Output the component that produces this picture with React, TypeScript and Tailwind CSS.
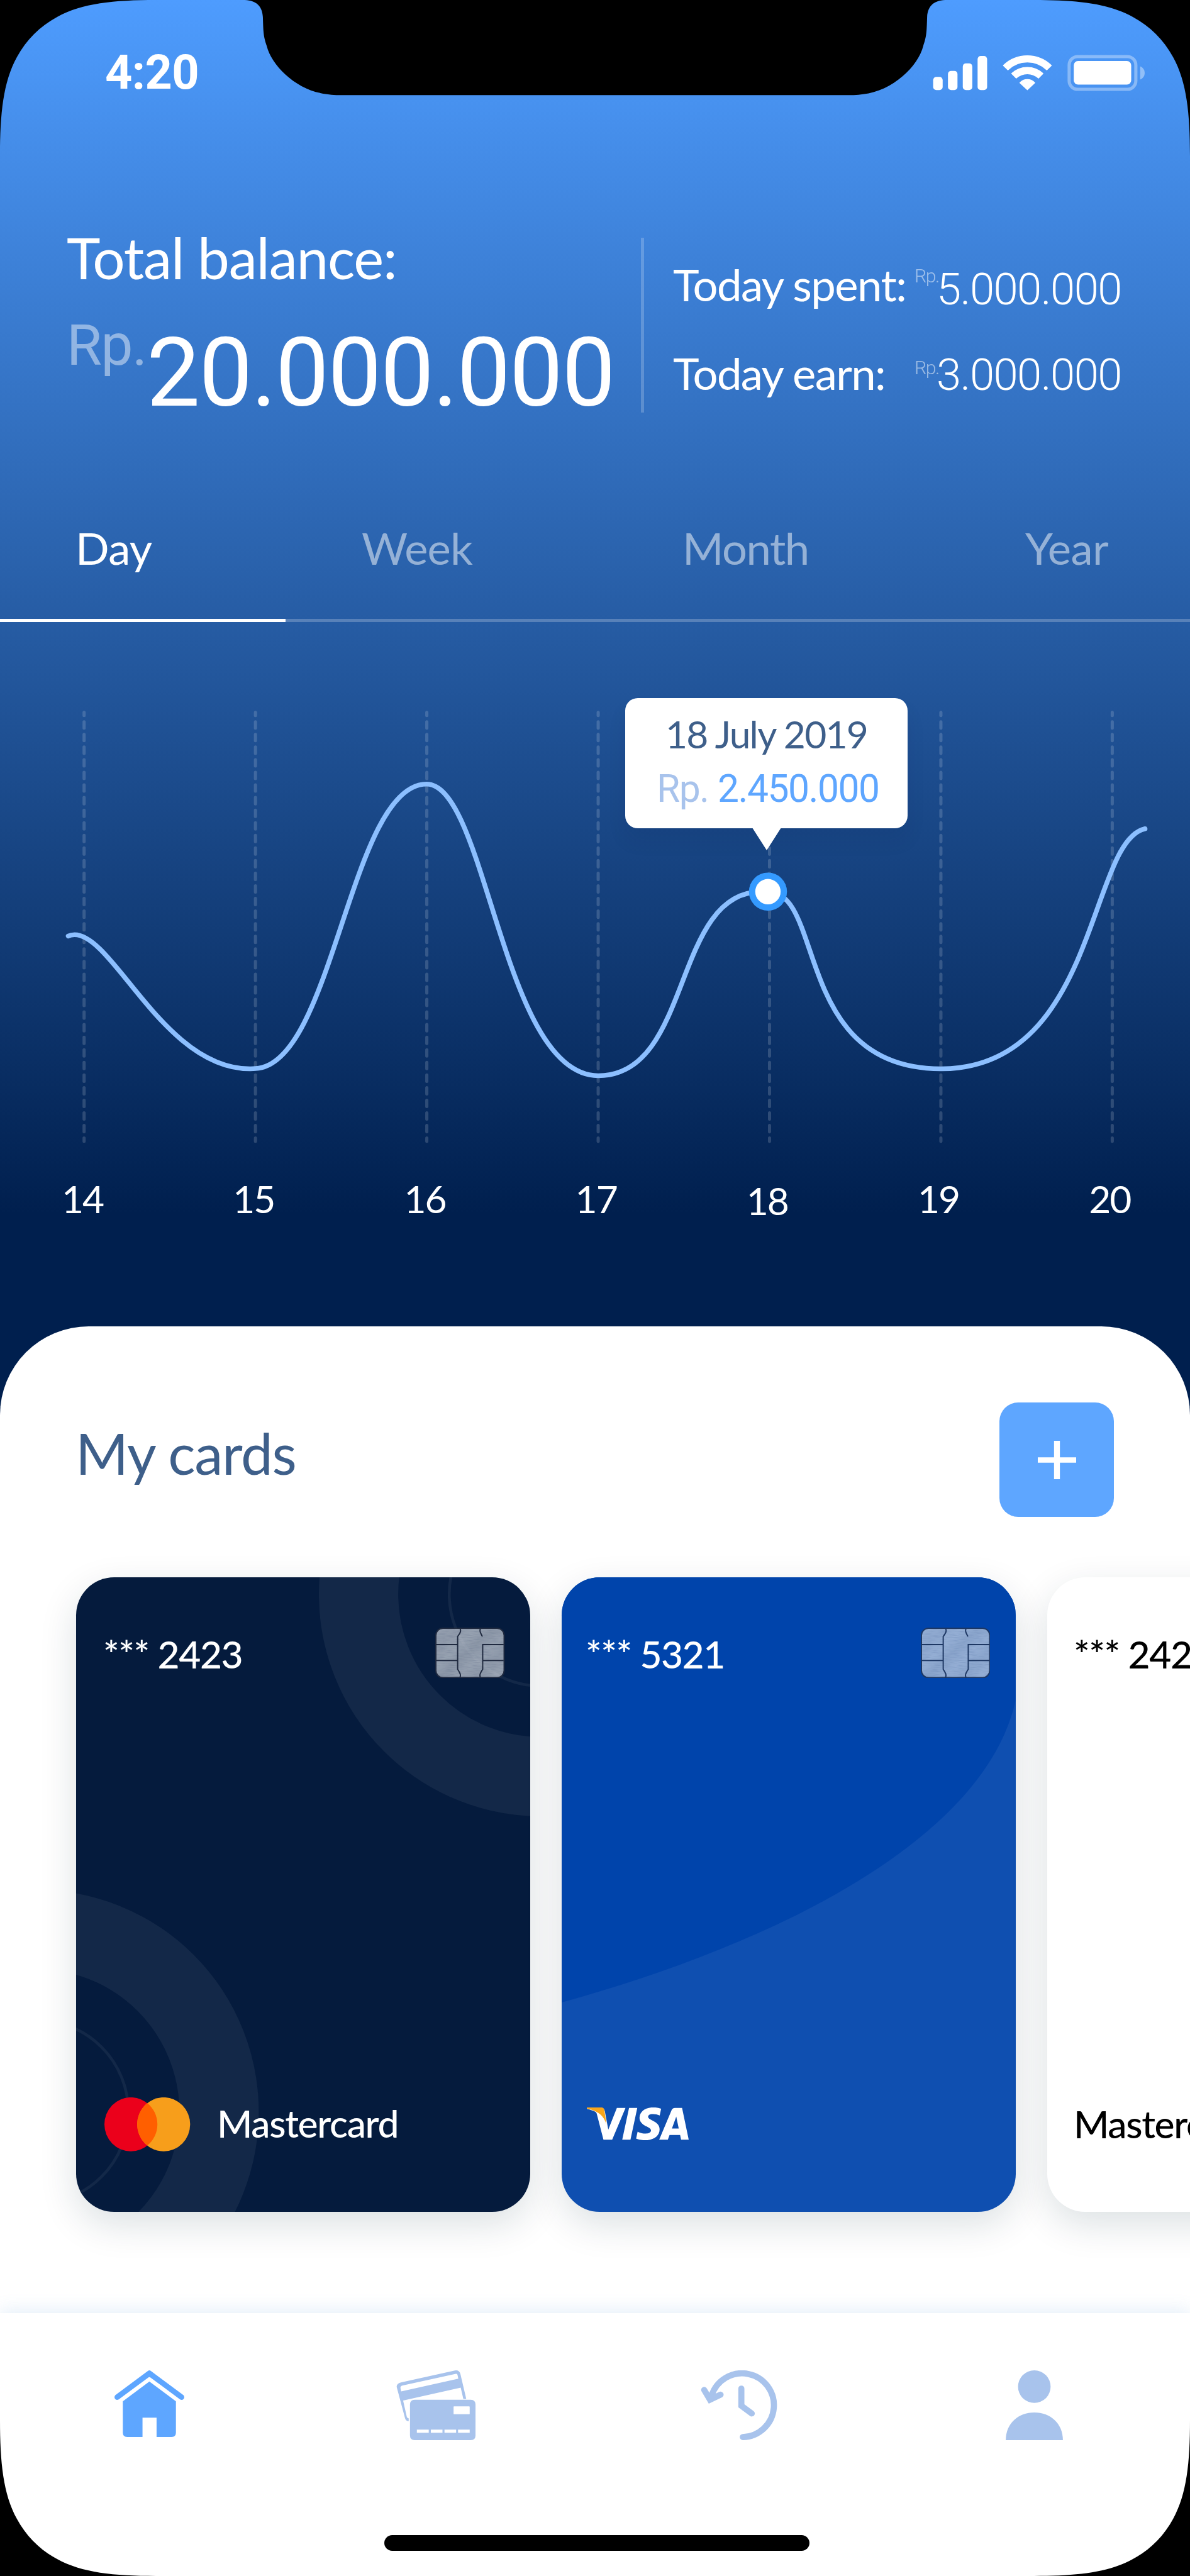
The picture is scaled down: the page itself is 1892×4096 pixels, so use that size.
import type { ReactNode } from "react";
import { SiVisa } from "react-icons/si";

const DAYS = [14, 15, 16, 17, 18, 19, 20];
const GRID_X = [159, 483, 807, 1131, 1455, 1779, 2103];

function StatusIcons() {
  return (
    <svg viewBox="1760 100 410 76" className="mt-[7px] h-[64px] w-[345px]" fill="white">
      <rect x="1764.3" y="145.5" width="18" height="25" rx="6" />
      <rect x="1792.3" y="134" width="18" height="36.5" rx="6" />
      <rect x="1820.3" y="120" width="18" height="50.5" rx="6" />
      <rect x="1848.3" y="106" width="18" height="64.5" rx="6" />
      <g stroke="white" strokeWidth="2" strokeLinejoin="round">
        <path d="M1897.3 123.8A64 63 0 0 1 1987.3 123.8L1979 132A52 51 0 0 0 1905.6 132Z" />
        <path d="M1913 139A43 42.5 0 0 1 1971.5 139L1963.3 147.5A31 31 0 0 0 1921.3 147.5Z" />
        <path d="M1928.5 156.5A19 19 0 0 1 1956 156.5L1942.3 169.5Z" />
      </g>
      <rect x="2021.3" y="107" width="126" height="62" rx="16" fill="none" stroke="white" strokeOpacity="0.35" strokeWidth="6" />
      <rect x="2030" y="115.5" width="108.5" height="44.5" rx="8" />
      <path d="M2155.5 125.5C2161 128 2164 132 2164 138S2161 148 2155.5 150.5Z" fillOpacity="0.4" />
    </svg>
  );
}

function AmountRow({
  label,
  amount,
  rpClass,
  amountClass,
  labelClass,
}: {
  label: string;
  amount: string;
  rpClass: string;
  amountClass: string;
  labelClass: string;
}) {
  return (
    <div className="flex h-[70px] items-start whitespace-nowrap text-white">
      <span className={`w-[384px] shrink-0 font-['Lato',sans-serif] text-[70.6px] leading-[70px] ${labelClass}`}>{label}</span>
      <span className={`w-[35px] shrink-0 text-[30.3px] leading-[30px] font-light tracking-[-1.5px] opacity-50 ${rpClass}`}>Rp.</span>
      <span className={`text-[70.6px] leading-[70px] font-light tracking-[-1.56px] ${amountClass}`}>{amount}</span>
    </div>
  );
}

function BalanceSummary() {
  return (
    <section className="flex h-[686px] items-start whitespace-nowrap">
      <div className="w-[1019px] shrink-0 pt-[213px] pl-[106px] text-white">
        <h1 className="font-['Lato',sans-serif] text-[90.8px] leading-[90px] tracking-[-1.25px]">Total balance:</h1>
        <div className="mt-[50px] flex items-start">
          <span className="w-[127px] shrink-0 text-[90.8px] leading-[90px] tracking-[-1.4px] opacity-45">Rp.</span>
          <span className="mt-[14px] text-[151.4px] leading-[152px] tracking-[-1.66px]">20.000.000</span>
        </div>
      </div>
      <div className="mt-[227px] h-[278px] w-[5px] shrink-0 bg-white/20" />
      <div className="flex flex-col gap-[71px] pt-[266px] pl-[46px]">
        <AmountRow label="Today spent:" amount="5.000.000" rpClass="mt-[7px]" amountClass="mt-[8px]" labelClass="tracking-[-1.55px]" />
        <AmountRow label="Today earn:" amount="3.000.000" rpClass="mt-[12px]" amountClass="mt-[3px]" labelClass="tracking-[-1.6px]" />
      </div>
    </section>
  );
}

function RangeTabs() {
  return (
    <nav>
      <div className="flex h-[147px] pl-[120px] font-['Lato',sans-serif] text-[70.6px] leading-[68px] text-white">
        <span className="w-[455px] tracking-[-0.6px]">Day</span>
        <span className="w-[510px] tracking-[-0.9px] opacity-50">Week</span>
        <span className="w-[545px] tracking-[-1.5px] opacity-50">Month</span>
        <span className="tracking-[-0.6px] opacity-50">Year</span>
      </div>
      <div className="h-[5px] bg-white/23">
        <div className="h-full w-[454px] bg-white" />
      </div>
    </nav>
  );
}

function BalanceChart() {
  return (
    <section>
      <div className="relative h-[887px]">
        <svg viewBox="0 1176.1 2250 1054.8" className="h-full w-full" fill="none">
          {GRID_X.map((x) => (
            <line
              key={x}
              x1={x}
              x2={x}
              y1="1347"
              y2="2158"
              stroke="white"
              strokeOpacity="0.16"
              strokeWidth="6"
              strokeLinecap="round"
              strokeDasharray="11.926 11.926"
              strokeDashoffset="5.963"
            />
          ))}
          <path
            d="M129 1770C133 1768 137 1767.500 141 1767.500C215 1767.500 310 2021 473 2021C476 2021 480 2021 483 2020.500C630 2014 662 1482.600 806.400 1482.600C920 1482.600 950 2034 1131 2034C1310 2034 1270 1686 1440 1686H1452C1560 1686 1500 2021 1779 2021C2075 2021 2058 1590 2165 1567"
            stroke="#8cbfff"
            strokeWidth="9"
            strokeLinecap="round"
          />
          <circle cx="1452" cy="1686" r="36" fill="#349aff" />
          <circle cx="1452" cy="1686" r="24" fill="white" />
        </svg>
        <div className="absolute top-[121px] left-[994px] h-[207px] w-[449px] rounded-[20px] bg-white pt-[27px] whitespace-nowrap shadow-[0_20px_30px_rgba(0,20,60,0.08)]">
          <p className="pl-[64px] font-['Lato',sans-serif] text-[60.5px] leading-[60px] tracking-[-1.75px] text-[#3e5f8a]">18 July 2019</p>
          <p className="mt-[28px] flex pl-[50px] text-[60.5px] leading-[60px]">
            <span className="w-[97px] tracking-[-1.6px] text-[#a8c3ec]">Rp.</span>
            <span className="tracking-[-1.5px] text-[#5ea6ff]">2.450.000</span>
          </p>
          <svg viewBox="0 0 54 42" className="absolute top-[206px] left-[202px] h-[36px] w-[46px]" fill="white">
            <path d="M0 0H54L27 42Z" />
          </svg>
        </div>
      </div>
      <div className="-ml-[5px] flex h-[60px] font-['Lato',sans-serif] text-[60.5px] leading-[60px] tracking-[-2px] text-white">
        {DAYS.map((d) => (
          <span key={d} className={`w-[272.2px] shrink-0 text-center ${d === 18 ? "mt-[2.5px]" : ""}`}>
            {d}
          </span>
        ))}
      </div>
    </section>
  );
}

function Chip({ id }: { id: string }) {
  return (
    <svg viewBox="38 54 394 287" className="h-[80.5px] w-[110.5px] opacity-67" fill="none">
      <defs>
        <linearGradient id={id} x1="0" y1="0" x2="1" y2="0.8">
          <stop offset="0" stopColor="#dde2e9" />
          <stop offset="0.22" stopColor="#d3d8e0" />
          <stop offset="0.38" stopColor="#dfe4ea" />
          <stop offset="0.52" stopColor="#cdd3db" />
          <stop offset="0.68" stopColor="#dde2e9" />
          <stop offset="0.84" stopColor="#d1d7df" />
          <stop offset="1" stopColor="#dde2e9" />
        </linearGradient>
        <filter id={`${id}-brush`} x="0" y="0" width="1" height="1">
          <feTurbulence type="fractalNoise" baseFrequency="0.02 0.25" numOctaves="2" seed="4" />
          <feColorMatrix values="0 0 0 0 0.35  0 0 0 0 0.4  0 0 0 0 0.5  0.9 0 0 0 -0.38" />
          <feComposite in2="SourceGraphic" operator="in" />
        </filter>
      </defs>
      <rect x="41" y="57" width="387" height="281" rx="40" fill={`url(#${id})`} />
      <rect x="41" y="57" width="387" height="281" rx="40" fill="white" filter={`url(#${id}-brush)`} />
      <g stroke="#2c3140" strokeWidth="7">
        <rect x="41.5" y="57.5" width="387" height="280" rx="40" />
        <path d="M178 57C186 74 180 84 165 104V290C182 316 184 325 177 340" />
        <path d="M295 57C287 74 296 86 304 102" strokeLinecap="round" />
        <path d="M426 150H307V290C290 316 288 325 295 340" />
        <path d="M42 150H165M42 240H165M307 240H426" />
      </g>
    </svg>
  );
}

function CardShell({ className, children }: { className: string; children: ReactNode }) {
  return (
    <article
      className={`relative h-[1009px] w-[721.5px] shrink-0 overflow-hidden rounded-[60.5px] font-['Lato',sans-serif] text-[60.5px] leading-[60px] font-medium whitespace-nowrap shadow-[0_20px_60px_rgba(10,40,60,0.14)] ${className}`}
    >
      {children}
    </article>
  );
}

function MastercardCard() {
  return (
    <CardShell className="bg-[#051b3d] text-white">
      <svg viewBox="144 2982 858 1200" preserveAspectRatio="none" className="absolute inset-0 h-full w-full" fill="none" stroke="#132848">
        <circle cx="1023" cy="3014" r="345" strokeWidth="150" />
        <circle cx="1023" cy="3014" r="173.5" strokeWidth="5.5" />
        <circle cx="69.3" cy="3993" r="345" strokeWidth="150" />
        <circle cx="69.3" cy="3993" r="173.5" strokeWidth="5.5" />
      </svg>
      <div className="relative flex h-full flex-col justify-between pt-[80px] pr-[40px] pb-[96px] pl-[43px]">
        <div className="flex items-start justify-between">
          <span className="mt-[12px] tracking-[-1.45px]">*** 2423</span>
          <Chip id="chip-a" />
        </div>
        <div className="flex items-start pl-[2px]">
          <svg viewBox="198 3966 164 102" className="h-[86px] w-[138px]">
            <ellipse cx="248" cy="4016.8" rx="50" ry="51" fill="#eb001b" />
            <ellipse cx="310" cy="4016.8" rx="50" ry="51" fill="#f79e1b" />
            <path d="M279 3976.7A50 51 0 0 1 279 4056.9A50 51 0 0 1 279 3976.7Z" fill="#ff5f00" />
          </svg>
          <span className="mt-[11.7px] ml-[41px] tracking-[-1.3px]">Mastercard</span>
        </div>
      </div>
    </CardShell>
  );
}

function VisaCard() {
  return (
    <CardShell className="bg-[#0f4fb0] text-white">
      <svg viewBox="1062 2982 858 1200" preserveAspectRatio="none" className="absolute inset-0 h-full w-full">
        <path d="M1062 2982H1920V3216C1865 3460 1515 3660 1062 3786Z" fill="#0044ab" />
      </svg>
      <div className="relative flex h-full flex-col justify-between pt-[80px] pr-[40.5px] pb-[114px] pl-[38px]">
        <div className="flex items-start justify-between">
          <span className="mt-[12px] tracking-[-1.5px]">*** 5321</span>
          <Chip id="chip-b" />
        </div>
        <div className="relative ml-[2px] flex h-[52px] w-[162px] items-center justify-center overflow-hidden">
          <SiVisa className="h-[162px] w-[162px] shrink-0" />
          <svg viewBox="45 73 576 185" preserveAspectRatio="none" className="absolute inset-0 h-full w-full" fill="#faa61a">
            <path d="M45 73H128C138 73 142 79 144 88L156 168C146 136 124 108 98 97C82 88 64 83 45 79Z" />
          </svg>
        </div>
      </div>
    </CardShell>
  );
}

function PlainCard() {
  return (
    <CardShell className="bg-white text-black">
      <div className="flex h-full flex-col justify-between pt-[92px] pb-[110px] pl-[42px]">
        <span className="tracking-[-1.45px]">*** 2423</span>
        <span className="tracking-[-1.3px]">Mastercard</span>
      </div>
    </CardShell>
  );
}

function HomeIcon() {
  return (
    <svg viewBox="216 4482 132 126" className="ml-[182px] h-[106px] w-[111px]" fill="#5ea6ff">
      <path d="M279.5 4483Q282 4481 284.5 4483L346.5 4529Q349.5 4533 346.5 4536.5Q343.5 4539 340 4537L284.5 4495.8Q282 4494 279.5 4495.8L224 4537Q220.5 4539 217.5 4536.5Q214.5 4533 217.5 4529Z" />
      <path d="M282 4503L332.2 4540.5V4600Q332.2 4608 324 4608H295.6V4571.5H269V4608H240Q231.8 4608 231.8 4600V4540.5Z" />
    </svg>
  );
}

function CardsIcon() {
  return (
    <svg viewBox="749 4482 150 132" className="ml-[337px] h-[111px] w-[126px]" fill="#a8c3ec">
      <path
        fillRule="evenodd"
        d="M759 4504.5L860 4482.2Q868.5 4481 870.5 4489L881.5 4536H876L871 4514.8L762 4539L769 4570Q770 4573 772.5 4572.5V4578.3Q767 4578 765.5 4572L750 4514Q748.5 4507 759 4504.5ZM761.5 4510.5L862 4488.5Q864.5 4488 865 4490.5L866.5 4497.8L758.3 4521.8L757 4515.5Q756.5 4511.5 761.5 4510.5Z"
      />
      <path
        fillRule="evenodd"
        d="M784 4537.5H890Q899 4537.5 899 4546.5V4605Q899 4614 890 4614H784Q775 4614 775 4605V4546.5Q775 4537.5 784 4537.5ZM858.5 4550Q857.5 4550 857.5 4551V4564Q857.5 4565 858.5 4565H887Q888 4565 888 4564V4551Q888 4550 887 4550ZM788 4594V4600H810.5V4594ZM814.5 4594V4600H836.5V4594ZM840.3 4594V4600H862.3V4594ZM866 4594V4600H888V4594Z"
      />
    </svg>
  );
}

function HistoryIcon() {
  return (
    <svg
      viewBox="1325 4482 146 132"
      className="ml-[358px] h-[111px] w-[123px]"
      fill="none"
      stroke="#a8c3ec"
      strokeWidth="11.5"
      strokeLinecap="round"
      strokeLinejoin="miter"
    >
      <path d="M1404.5 4608.2A60.3 60.3 0 1 0 1345.5 4530" />
      <path d="M1331.5 4519L1342.5 4537.5L1362.5 4528" />
      <path d="M1401.8 4516.5V4549L1421.5 4563.5" />
    </svg>
  );
}

function PersonIcon() {
  return (
    <svg viewBox="1902 4482 108 132" className="ml-[362px] h-[111px] w-[91px]" fill="#a8c3ec">
      <circle cx="1956" cy="4512.8" r="30.8" />
      <path d="M1902 4614C1902 4582 1926 4561.6 1956 4561.6S2010 4582 2010 4614Z" />
    </svg>
  );
}

function BottomNav() {
  return (
    <nav className="relative mt-[161px] h-[418px] bg-white pt-[91px] shadow-[0_-5px_26px_rgba(70,140,210,0.14)]">
      <div className="flex h-[111px] items-start">
        <HomeIcon />
        <CardsIcon />
        <HistoryIcon />
        <PersonIcon />
      </div>
      <div className="mt-[151px] ml-[611px] h-[25px] w-[676px] rounded-full bg-black" />
    </nav>
  );
}

function Bezel() {
  const corner = "M0 0V295C0 215 6 155 32 108C50 75 75 50 108 32C155 6 215 0 295 0Z";
  return (
    <svg viewBox="0 0 2250 4872" preserveAspectRatio="none" className="pointer-events-none absolute inset-0 h-full w-full" fill="black">
      <path d={corner} />
      <path d={corner} transform="translate(2250 0) scale(-1 1)" />
      <path d={corner} transform="translate(0 4872) scale(1 -1)" />
      <path d={corner} transform="translate(2250 4872) scale(-1 -1)" />
      <path d="M463 0C485 1 496 12 497 32C498 62 498 68 504.4 87C514 125 562 172 618 178C630 180 640 180 660 180H1590C1610 180 1620 180 1632 178C1688 172 1736 125 1745.6 87C1752 68 1752 62 1753 32C1754 12 1765 1 1787 0Z" />
    </svg>
  );
}

export default function App() {
  return (
    <div className="relative h-[4096px] w-[1892px] overflow-hidden bg-[linear-gradient(180deg,#4e9cfe_0px,#001f4e_1930px)] font-['Roboto',sans-serif]">
      <header className="flex h-[151px] items-start justify-between pt-[77px] pr-[67px] pl-[167px]">
        <span className="text-[75.7px] leading-[76px] font-bold tracking-[-0.6px] text-white">4:20</span>
        <StatusIcons />
      </header>
      <BalanceSummary />
      <RangeTabs />
      <BalanceChart />
      <main className="mt-[173px] h-[1987px] rounded-t-[141px] bg-white">
        <div className="flex items-start justify-between pt-[121px] pr-[121px] pl-[120px]">
          <h2 className="mt-[35px] font-['Lato',sans-serif] text-[90.8px] leading-[90px] tracking-[-1.3px] text-[#3e5f8a]">My cards</h2>
          <button className="flex h-[182px] w-[182px] items-center justify-center rounded-[30px] bg-[#5ea6ff]">
            <svg viewBox="0 0 72 72" className="h-[61px] w-[61px]" fill="white">
              <path d="M30.5 0H41.5V31H72V41H41.5V72H30.5V41H0V31H30.5Z" />
            </svg>
          </button>
        </div>
        <div className="mt-[95.5px] flex gap-[50.5px] pl-[121px]">
          <MastercardCard />
          <VisaCard />
          <PlainCard />
        </div>
        <BottomNav />
      </main>
      <Bezel />
    </div>
  );
}
